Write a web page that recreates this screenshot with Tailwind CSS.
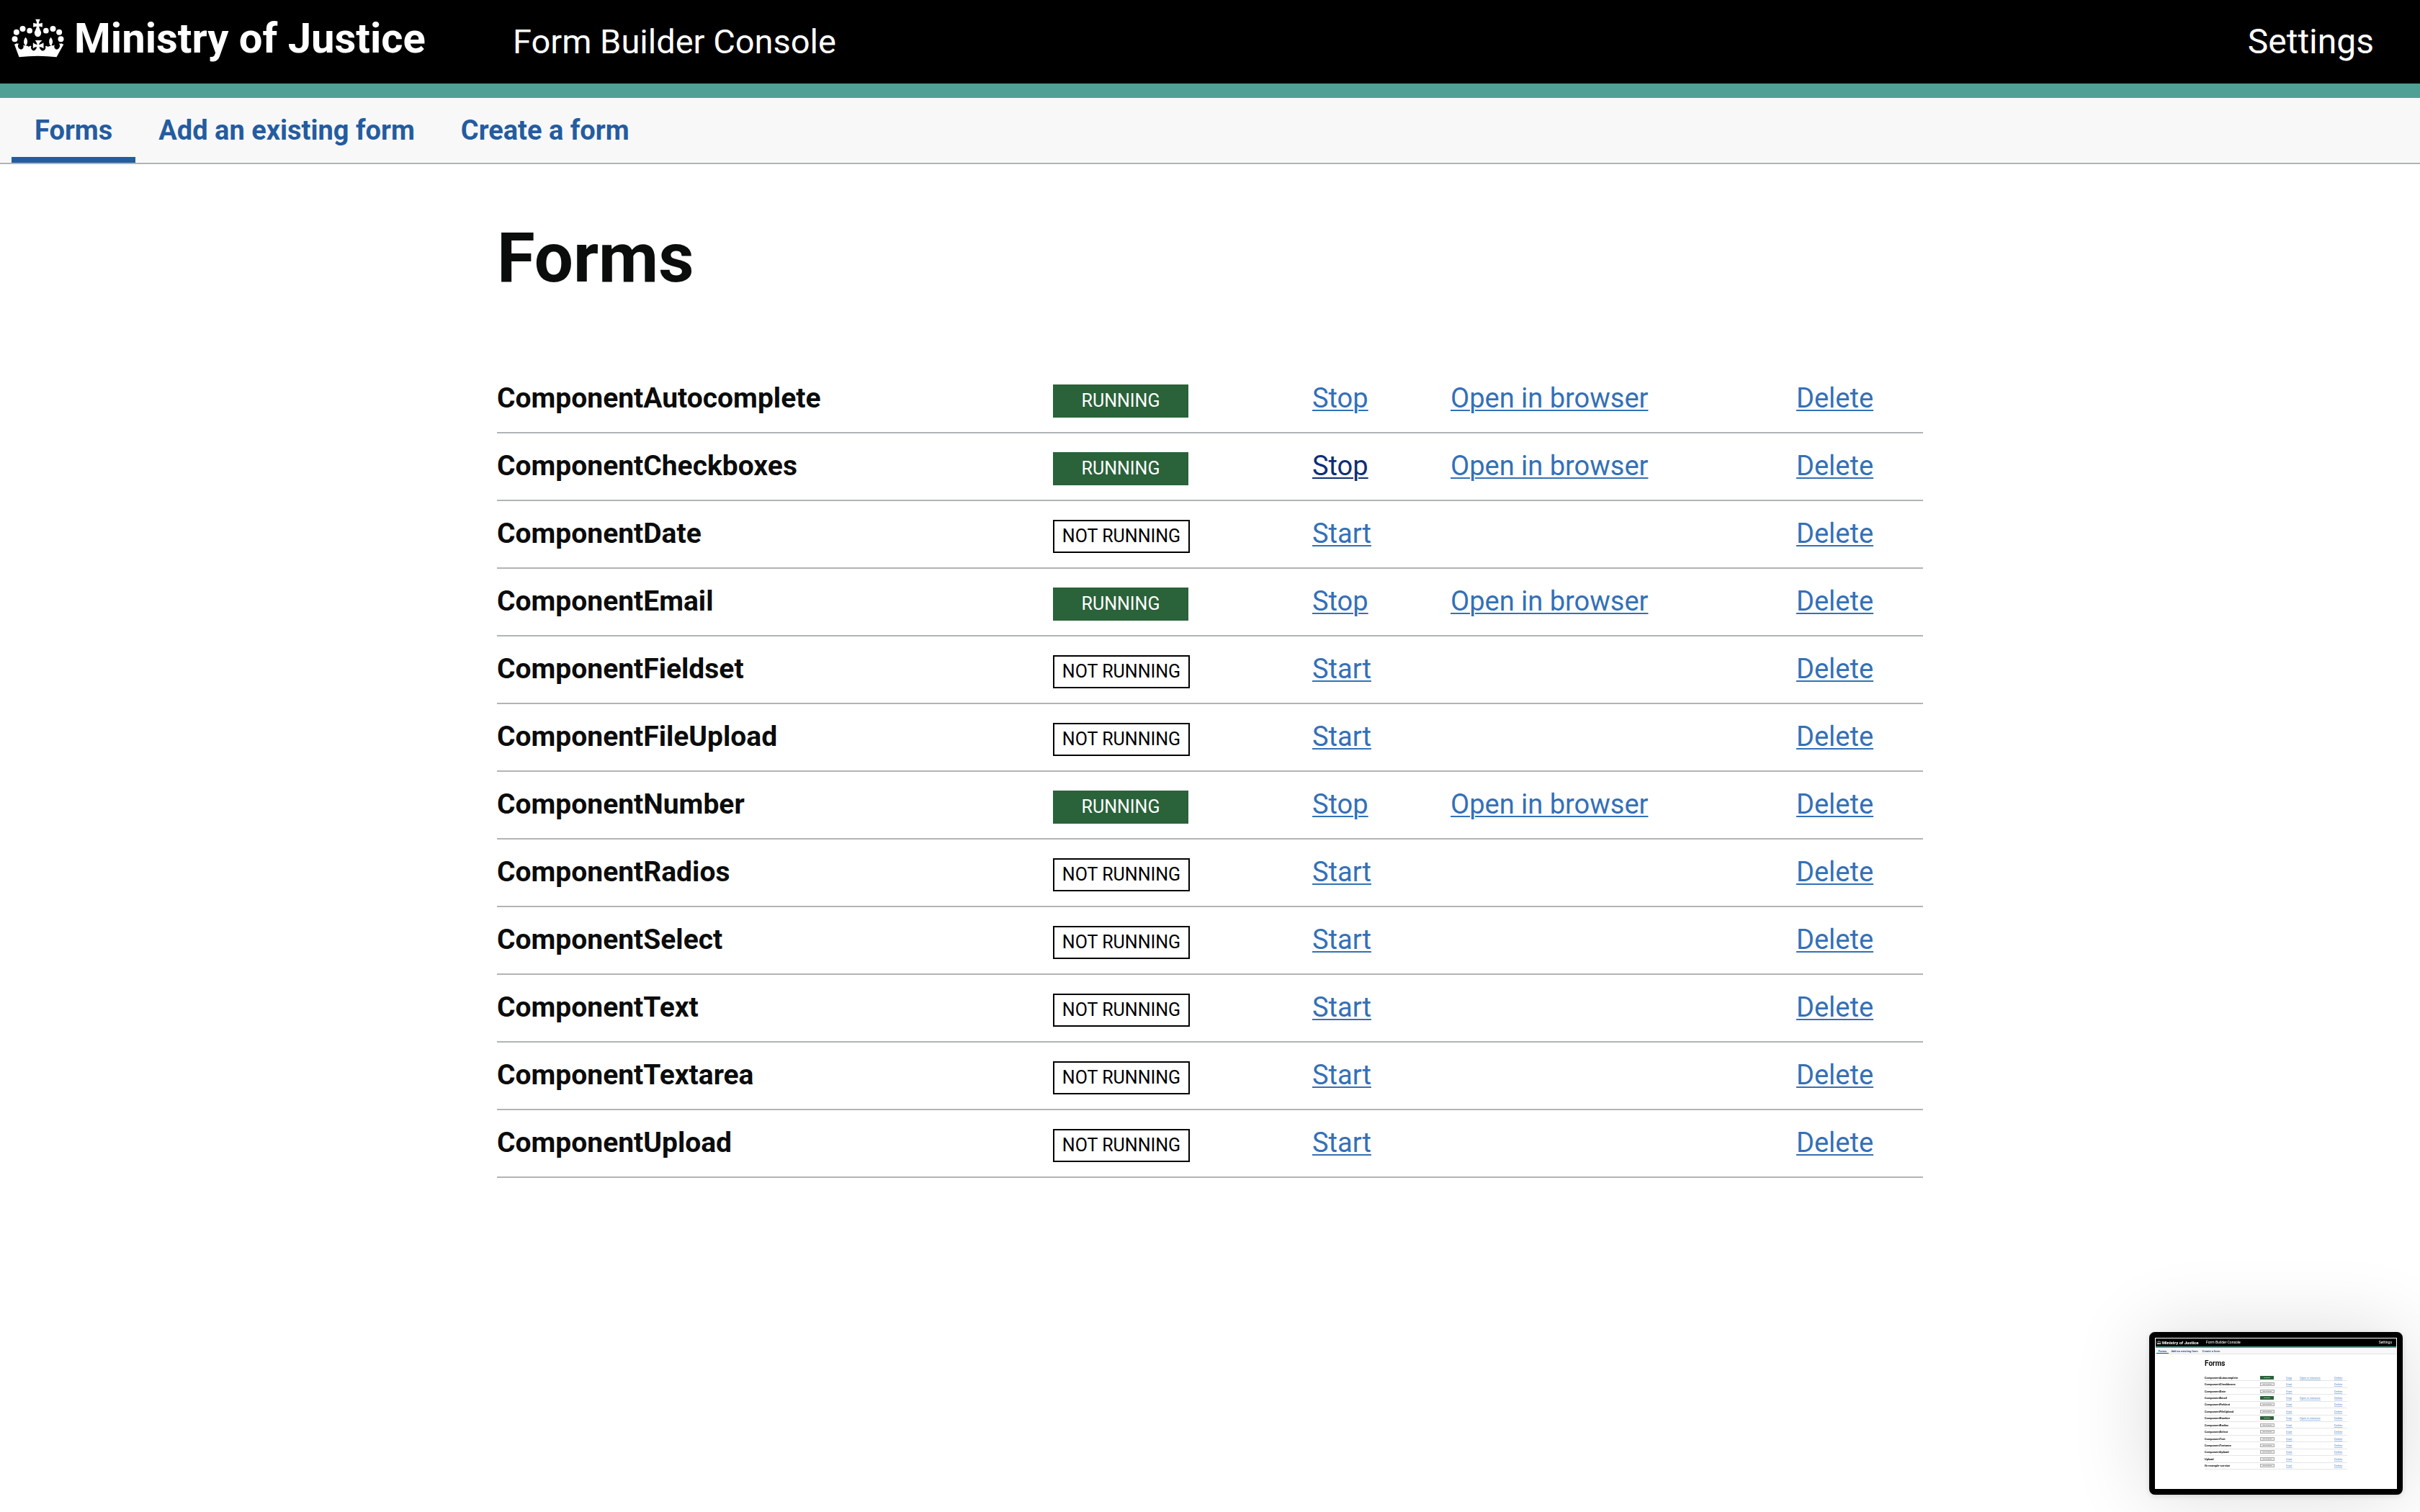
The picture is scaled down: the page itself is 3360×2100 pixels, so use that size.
<!DOCTYPE html>
<html lang="en">
<head>
<meta charset="utf-8">
<meta name="viewport" content="width=device-width, initial-scale=1">
<title>Form Builder Console</title>
<script src="https://cdn.jsdelivr.net/npm/@tailwindcss/browser@4"></script>
</head>
<body class="min-h-screen bg-white font-['Roboto',sans-serif] text-[#0b0c0c]">
<svg class="hidden" aria-hidden="true">
  <symbol id="crown" viewBox="47 80 218 162">
    <circle cx="60" cy="165" r="12"/><circle cx="67" cy="136" r="12"/><circle cx="93" cy="122" r="12"/><circle cx="122" cy="130" r="11.500"/>
    <circle cx="252" cy="165" r="12"/><circle cx="245" cy="136" r="12"/><circle cx="219" cy="122" r="12"/><circle cx="190" cy="130" r="11.500"/>
    <path d="M146 82h20q-5 8-6 18q7 0 15-3v18q-7-3-14-3q1 8 5 15q6 8 3 18q-4 10-13 10t-13-10q-3-10 3-18q4-7 5-15q-7 0-14 3V97q8 3 15 3q-1-10-6-18z"/>
    <path d="M138 170h36q-10 8-14 18q8 1 20-8v24q-10-8-18-6q2 9 10 15q10 3 15-6q4-6 0-12q6-2 11 2q5-4 13-3q-8-6-8-17q0-13 7-20q7 7 8 17q0 10-5 17q8 2 14-2q-4 5-2 12q5 10 14 6q7-4 9-12q0-8-4-12q8 3 10-1q4 5 10 4L234 240q-78-10-156 0L58 186q6 1 9-4q3 3 10 2q-4 4-4 11q1 8 9 12q9 4 14-6q2-7-2-12q5 4 10 2q-8-7-6-19q1-8 7-15q7 6 8 17q0 13-8 19q8-1 13 4q6-5 11-3q-4 6 0 12q5 10 14 6q8-6 9-14q-8-2-16 6v-24q10 9 18 8q-3-10-9-18z"/>
  </symbol>
</svg>

<header class="flex h-[136px] items-center border-b-20 border-[#50a095] bg-black pr-16 pl-4 text-white">
  <a href="#" class="flex w-[696px] items-center gap-[14px] pb-[10px] text-[58px] leading-[106px] font-bold">
    <svg class="h-[54px] w-[73px] shrink-0 fill-current" aria-hidden="true"><use href="#crown"/></svg>
    <span class="whitespace-nowrap">Ministry of Justice</span>
  </a>
  <a href="#" class="text-[47px] leading-[116px]">Form Builder Console</a>
  <a href="#" class="ml-auto text-[48px] leading-[116px]">Settings</a>
</header>

<nav class="flex border-b-2 border-[#b1b4b6] bg-[#f8f8f8] px-4 text-[38px] leading-[74px] font-bold text-[#245ca0]" aria-label="Primary">
  <a href="#" aria-current="page" class="border-b-8 border-[#245ca0] px-8 pt-2">Forms</a>
  <a href="#" class="border-b-8 border-transparent px-8 pt-2">Add an existing form</a>
  <a href="#" class="border-b-8 border-transparent px-8 pt-2">Create a form</a>
</nav>

<main class="mx-auto max-w-[1980px] pt-20">
  <h1 class="mb-25 text-[96px] leading-[100px] font-bold">Forms</h1>
  <table class="w-full table-fixed text-left text-[38px] leading-[50px]">
    <colgroup><col><col class="w-[360px]"><col class="w-[192px]"><col class="w-[480px]"><col class="w-[176px]"></colgroup>
    <tbody id="forms"></tbody>
  </table>
</main>

<!-- Floating preview card -->
<aside class="fixed right-6 bottom-6 w-[352px] rounded-lg border-8 border-black bg-white shadow-[0_0_110px_rgba(0,0,0,0.14),0_2px_8px_rgba(0,0,0,0.12)]" aria-label="Preview">
  <div class="h-[210px] border border-white text-[4px] leading-[5px]">
    <div class="flex h-[13px] items-center border-b-2 border-[#50a095] bg-black pr-[6px] pl-px text-white">
      <div class="flex w-[69px] items-center gap-px text-[6px] font-bold whitespace-nowrap"><svg class="h-[5px] w-[7px] fill-current" aria-hidden="true"><use href="#crown"/></svg>Ministry of Justice</div>
      <div class="text-[5px]">Form Builder Console</div>
      <div class="ml-auto text-[5px]">Settings</div>
    </div>
    <div class="flex h-[9px] border-b border-[#e4e5e6] bg-[#f8f8f8] px-px font-bold text-[#245ca0]">
      <div class="border-b border-[#245ca0] px-[3px] pt-[2px]">Forms</div>
      <div class="px-[3px] pt-[2px]">Add an existing form</div>
      <div class="px-[3px] pt-[2px]">Create a form</div>
    </div>
    <div class="mx-auto w-[198px] pt-2">
      <div class="mb-[10px] text-[10px] leading-[10px] font-bold">Forms</div>
      <div id="preview" class="grid h-[132px] auto-rows-fr"></div>
    </div>
  </div>
</aside>

<script>
const forms = [
  ['ComponentAutocomplete', true], ['ComponentCheckboxes', true], ['ComponentDate', false],
  ['ComponentEmail', true], ['ComponentFieldset', false], ['ComponentFileUpload', false],
  ['ComponentNumber', true], ['ComponentRadios', false], ['ComponentSelect', false],
  ['ComponentText', false], ['ComponentTextarea', false], ['ComponentUpload', false],
];
const link = 'underline decoration-2 underline-offset-3 ';
document.getElementById('forms').innerHTML = forms.map(([name, on], i) => `
  <tr class="border-b-2 border-[#b1b4b6] align-top">
    <th scope="row" class="py-5 text-[39px] font-bold">${name}</th>
    <td class="py-5"><span class="${on
      ? 'mt-[6px] block h-[46px] w-[188px] bg-[#2a623a] text-center text-[25px] leading-[46px] text-white'
      : 'mt-[6px] block h-[46px] w-[190px] border-2 border-black text-center text-[25px] leading-[42px] text-black'}">${on ? 'RUNNING' : 'NOT RUNNING'}</span></td>
    <td class="py-5"><a href="#" class="${link}${i === 1 ? 'text-[#0f2e74]' : 'text-[#3470b7]'}">${on ? 'Stop' : 'Start'}</a></td>
    <td class="py-5">${on ? `<a href="#" class="${link}text-[#3470b7]">Open in browser</a>` : ''}</td>
    <td class="py-5"><a href="#" class="${link}text-[#3470b7]">Delete</a></td>
  </tr>`).join('');

const previewForms = forms.map(([name, on], i) => [name, on && i !== 1]).concat([['Upload', false], ['fb-example-service', false]]);
document.getElementById('preview').innerHTML = previewForms.map(([name, on]) => `
  <div class="grid grid-cols-[77px_36px_19px_48px_18px] items-center border-b border-[#e6e6e6] text-[#5b8fca]">
    <span class="font-bold text-[#0b0c0c]">${name}</span>
    <span class="${on
      ? 'h-[5px] w-[19px] bg-[#2a623a] text-center text-[2px] text-white'
      : 'h-[5px] w-[20px] border border-[#aaaaaa] bg-[#eeeeee] text-center text-[2px] leading-[3px] text-[#333333]'}">${on ? 'RUNNING' : 'NOT RUNNING'}</span>
    <span><span class="underline decoration-[#a9c4e4]">${on ? 'Stop' : 'Start'}</span></span>
    <span><span class="underline decoration-[#a9c4e4]">${on ? 'Open in browser' : ''}</span></span>
    <span><span class="underline decoration-[#a9c4e4]">Delete</span></span>
  </div>`).join('');
</script>
</body>
</html>
